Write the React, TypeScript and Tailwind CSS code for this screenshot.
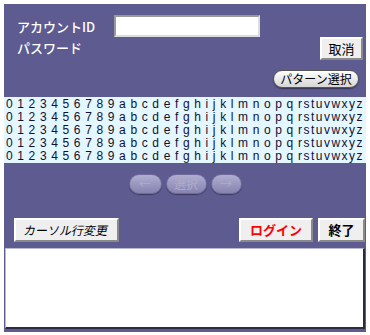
const JP = "font-['Noto_Sans_CJK_JP',sans-serif]";
const ROW = '0 1 2 3 4 5 6 7 8 9 a b c d e f g h i j k l m n o p q rstuvwxyz';

const bevel =
  'bg-[#efefef] border-2 border-t-white border-l-white border-r-[#8a8a8a] border-b-[#8a8a8a] flex items-center justify-center';

function NavPill({ label, w }: { label: string; w: string }) {
  return (
    <div
      className={`${w} h-[20px] rounded-full bg-gradient-to-b from-[#b0aed0] to-[#8683b0] border border-[#6f6c9c] shadow-[0_1px_1px_rgba(0,0,0,0.35)] flex items-center justify-center text-[12px] text-[#aeacc9] ${JP}`}
    >
      {label}
    </div>
  );
}

export default function App() {
  return (
    <div className="w-[370px] h-[335px] bg-white p-[4px]">
      <div className={`w-[362px] h-[328px] bg-[#5d5b8f] flex flex-col ${JP}`}>
        {/* account */}
        <div className="flex items-center mt-[11px] ml-[13px]">
          <span className="w-[97px] text-[13px] font-medium text-white leading-none">アカウントID</span>
          <div className="w-[146px] h-[22px] bg-white border-2 border-t-[#9a9a9a] border-l-[#9a9a9a] border-r-[#dcdcdc] border-b-[#dcdcdc]" />
        </div>

        {/* password + cancel */}
        <div className="flex items-start">
          <span className="ml-[13px] mt-[3px] text-[13px] font-medium text-white leading-[16px]">パスワード</span>
          <button className={`${bevel} ml-auto mr-[3px] w-[43px] h-[23px] text-[13px] text-black ${JP}`}>
            取消
          </button>
        </div>

        <div className="flex justify-end mt-[10px] mr-[7px]">
          <button
            className={`w-[86px] h-[18px] rounded-full bg-gradient-to-b from-white to-[#d6d6d6] border border-[#555] shadow-[0_1px_1px_rgba(0,0,0,0.4)] text-[12px] leading-none text-black flex items-center justify-center ${JP}`}
          >
            パターン選択
          </button>
        </div>

        {/* pattern strip */}
        <div className="mt-[9px] h-[66px] bg-[#e4f7ff] pt-[1px] pl-[2px] font-['Liberation_Sans',sans-serif] text-[12px] leading-[13px] text-[#101030] tracking-[1.5px] [word-spacing:-1.7px] whitespace-nowrap overflow-hidden">
          {[0, 1, 2, 3, 4].map((i) => (
            <div key={i}>{ROW}</div>
          ))}
        </div>

        {/* nav */}
        <div className="flex justify-center gap-[4px] mt-[11px]">
          <NavPill label="←" w="w-[33px]" />
          <NavPill label="選択" w="w-[41px]" />
          <NavPill label="→" w="w-[31px]" />
        </div>

        {/* actions */}
        <div className="flex items-center mt-[24px]">
          <button className={`${bevel} ml-[10px] w-[105px] h-[24px] text-[12px] text-black ${JP}`}>
            <span className="inline-block -skew-x-12">カーソル行変更</span>
          </button>
          <button className={`${bevel} ml-auto w-[74px] h-[24px] text-[13px] font-bold text-[#ff0000] ${JP}`}>
            ログイン
          </button>
          <button className={`${bevel} ml-[5px] mr-[1px] w-[47px] h-[24px] text-[13px] font-bold text-black ${JP}`}>
            終了
          </button>
        </div>

        <textarea className="mt-[6px] mx-[1px] h-[81px] bg-white border border-t-[#b9b8d6] border-l-[#b9b8d6] border-r-[#2a2a40] border-b-[#2a2a40] border-r-2 border-b-2 resize-none outline-none" />
      </div>
    </div>
  );
}
